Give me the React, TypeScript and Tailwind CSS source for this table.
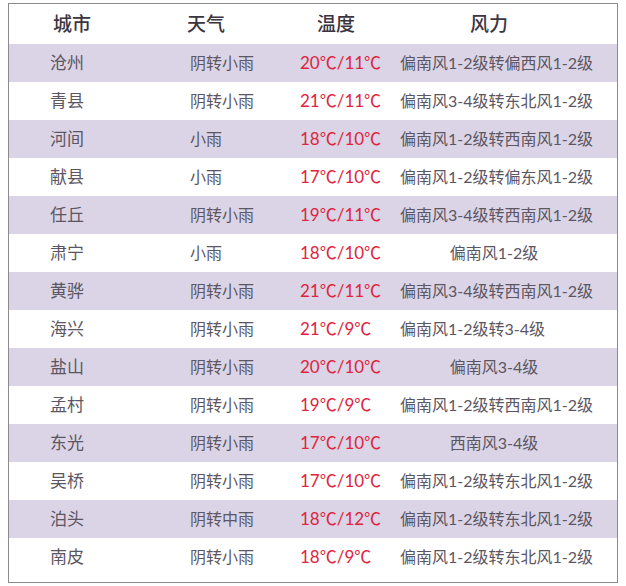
import React from 'react';

interface Row {
  city: string;
  weather: string;
  temp: string;
  wind: string;
  center?: boolean;
}

const rows: Row[] = [
  { city: '沧州', weather: '阴转小雨', temp: '20℃/11℃', wind: '偏南风1-2级转偏西风1-2级' },
  { city: '青县', weather: '阴转小雨', temp: '21℃/11℃', wind: '偏南风3-4级转东北风1-2级' },
  { city: '河间', weather: '小雨', temp: '18℃/10℃', wind: '偏南风1-2级转西南风1-2级' },
  { city: '献县', weather: '小雨', temp: '17℃/10℃', wind: '偏南风1-2级转偏东风1-2级' },
  { city: '任丘', weather: '阴转小雨', temp: '19℃/11℃', wind: '偏南风3-4级转西南风1-2级' },
  { city: '肃宁', weather: '小雨', temp: '18℃/10℃', wind: '偏南风1-2级', center: true },
  { city: '黄骅', weather: '阴转小雨', temp: '21℃/11℃', wind: '偏南风3-4级转西南风1-2级' },
  { city: '海兴', weather: '阴转小雨', temp: '21℃/9℃', wind: '偏南风1-2级转3-4级' },
  { city: '盐山', weather: '阴转小雨', temp: '20℃/10℃', wind: '偏南风3-4级', center: true },
  { city: '孟村', weather: '阴转小雨', temp: '19℃/9℃', wind: '偏南风1-2级转西南风1-2级' },
  { city: '东光', weather: '阴转小雨', temp: '17℃/10℃', wind: '西南风3-4级', center: true },
  { city: '吴桥', weather: '阴转小雨', temp: '17℃/10℃', wind: '偏南风1-2级转东北风1-2级' },
  { city: '泊头', weather: '阴转中雨', temp: '18℃/12℃', wind: '偏南风1-2级转东北风1-2级' },
  { city: '南皮', weather: '阴转小雨', temp: '18℃/9℃', wind: '偏南风1-2级转东北风1-2级' },
];

const font = { fontFamily: '"Lato", "Noto Sans CJK SC", sans-serif' };

const App = () => {
  return (
    <div className="w-[626px] h-[586px] bg-white pt-[3px] pl-[8px]" style={font}>
      <div className="w-[610px] h-[580px] border border-[#8c8a8e] bg-white">
        {/* header */}
        <div className="h-[40px] flex items-center text-[19px] font-medium text-[#3b3541]">
          <div className="w-[178px] pl-[44px]">城市</div>
          <div className="w-[130px]">天气</div>
          <div className="w-[153px]">温度</div>
          <div>风力</div>
        </div>

        {rows.map((r, i) => (
          <div
            key={r.city}
            className={`h-[38px] flex items-center text-[16px] text-[#5c5663] whitespace-nowrap ${
              i % 2 === 0 ? 'bg-[#dad4e6]' : 'bg-white'
            }`}
          >
            <div className="w-[181px] pl-[41px] text-[17px]">{r.city}</div>
            <div className="w-[110px]">{r.weather}</div>
            <div className="w-[100px] text-[17px] text-[#de2440]">{r.temp}</div>
            <div className={r.center ? 'w-[188px] text-center' : ''}>{r.wind}</div>
          </div>
        ))}
      </div>
    </div>
  );
};

export default App;
